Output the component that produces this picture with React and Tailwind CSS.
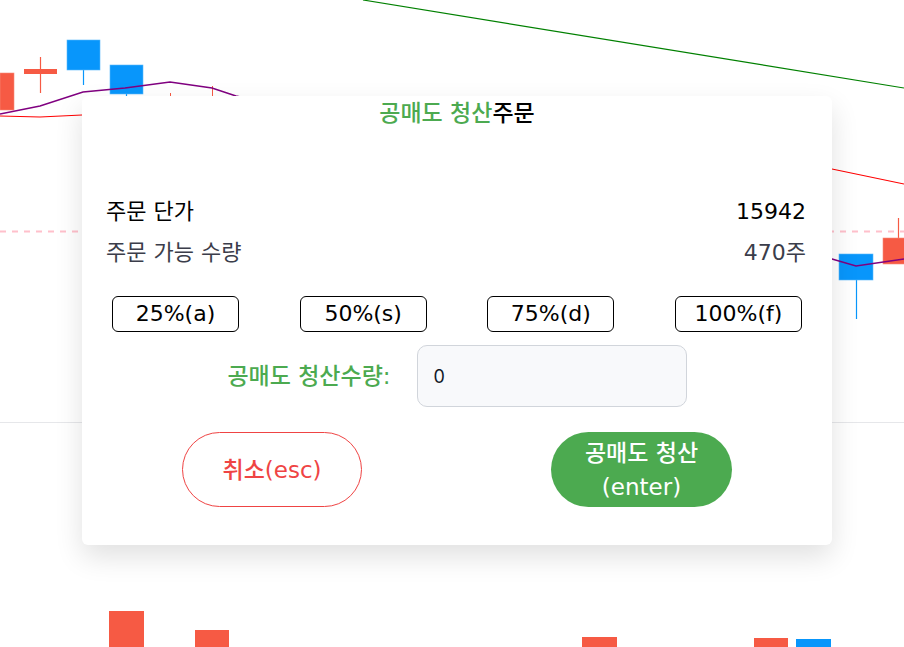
import React from "react";

const RED = "#f65a44";
const BLUE = "#0896fb";

function Chart() {
  return (
    <svg className="absolute inset-0" width="904" height="647" viewBox="0 0 904 647">
      <line x1="0" y1="422.5" x2="904" y2="422.5" stroke="#e6e7ea" strokeWidth="1" />
      <line x1="0" y1="231.5" x2="904" y2="231.5" stroke="#ffc0cb" strokeWidth="2" strokeDasharray="6 6" />
      <line x1="363" y1="0" x2="904" y2="88" stroke="#008000" strokeWidth="1.2" />
      <polyline points="0,116 40,117 82,115 300,110 832,169 904,184" fill="none" stroke="#ff0000" strokeWidth="1.2" />
      <rect x="0" y="73" width="14" height="37" fill={RED} stroke="#f98a7a" strokeWidth="0.6" />
      <line x1="40.5" y1="57" x2="40.5" y2="93" stroke={RED} strokeWidth="1.2" />
      <rect x="24" y="69" width="33" height="5" fill={RED} />
      <line x1="83.5" y1="70" x2="83.5" y2="85" stroke={BLUE} strokeWidth="1.2" />
      <rect x="67" y="40" width="33" height="30" fill={BLUE} stroke="#5ab8fc" strokeWidth="0.6" />
      <line x1="126.5" y1="94" x2="126.5" y2="100" stroke={BLUE} strokeWidth="1.2" />
      <rect x="110" y="65" width="33" height="29" fill={BLUE} stroke="#5ab8fc" strokeWidth="0.6" />
      <line x1="170.5" y1="93" x2="170.5" y2="100" stroke={RED} strokeWidth="1" />
      <line x1="212.5" y1="86" x2="212.5" y2="100" stroke={RED} strokeWidth="1" />
      <line x1="856.5" y1="279" x2="856.5" y2="319" stroke={BLUE} strokeWidth="1.2" />
      <rect x="839" y="254" width="34" height="26" fill={BLUE} stroke="#5ab8fc" strokeWidth="0.6" />
      <line x1="898.5" y1="218" x2="898.5" y2="238" stroke={RED} strokeWidth="1.2" />
      <rect x="883" y="238" width="24" height="26" fill={RED} stroke="#f98a7a" strokeWidth="0.6" />
      <polyline points="0,114 40,106 83,92 125,88 170,82 212,88 236,96 300,110 832,259 856,266 904,259" fill="none" stroke="#800080" strokeWidth="1.5" />
      <rect x="109" y="611" width="35" height="36" fill={RED} />
      <rect x="195" y="630" width="34" height="17" fill={RED} />
      <rect x="582" y="637" width="35" height="10" fill={RED} />
      <rect x="754" y="638" width="34" height="9" fill={RED} />
      <rect x="796" y="639" width="35" height="8" fill={BLUE} />
    </svg>
  );
}

export default function App() {
  const font = { fontFamily: '"DejaVu Sans", "Noto Sans CJK KR", sans-serif' };
  return (
    <div className="relative w-[904px] h-[647px] bg-white overflow-hidden" style={font}>
      <Chart />
      <div className="absolute left-[82px] top-[96px] w-[750px] h-[449px] bg-white rounded-md shadow-[0_12px_28px_rgba(0,0,0,0.12)] flex flex-col">
        <div className="pt-[3px] h-[31px] text-center text-[23px] leading-[28px] font-medium">
          <span className="text-[#4caa50]">공매도 청산</span>
          <span className="text-black">주문</span>
        </div>
        <div className="mt-[71px] pl-[24px] pr-[26px] flex justify-between items-center h-[28px] text-[22px] leading-[28px] text-black">
          <span>주문 단가</span>
          <span>15942</span>
        </div>
        <div className="mt-[13px] pl-[24px] pr-[26px] flex justify-between items-center h-[28px] text-[22px] leading-[28px] text-[#3b3d4a]">
          <span>주문 가능 수량</span>
          <span>470주</span>
        </div>
        <div className="mt-[29px] px-[30px] flex justify-between">
          {["25%(a)", "50%(s)", "75%(d)", "100%(f)"].map((t) => (
            <button
              key={t}
              className="w-[127px] h-[36px] border border-black rounded-md bg-white text-[22px] leading-[28px] text-black flex items-center justify-center"
            >
              {t}
            </button>
          ))}
        </div>
        <div className="mt-[13px] flex justify-center items-center gap-[26px]">
          <span className="text-[23px] leading-[28px] font-medium text-[#4caa50]">공매도 청산수량:</span>
          <div className="w-[270px] h-[62px] rounded-[10px] border border-[#d1d5db] bg-[#f8f9fb] flex items-center px-[16px] text-[18px] text-[#111827]" style={{ fontFamily: 'Inter, "Noto Sans", sans-serif' }}>
            0
          </div>
        </div>
        <div className="mt-[25px] flex justify-center gap-[189px]">
          <button className="w-[180px] h-[75px] rounded-full border border-[#ef4444] bg-white text-[#ef4444] text-[23px] leading-[28px] font-medium flex items-center justify-center">
            취소(esc)
          </button>
          <button className="w-[181px] h-[75px] rounded-full bg-[#4caa50] text-white text-[23px] leading-[34px] font-medium flex flex-col items-center justify-center">
            <span>공매도 청산</span>
            <span>(enter)</span>
          </button>
        </div>
      </div>
    </div>
  );
}
